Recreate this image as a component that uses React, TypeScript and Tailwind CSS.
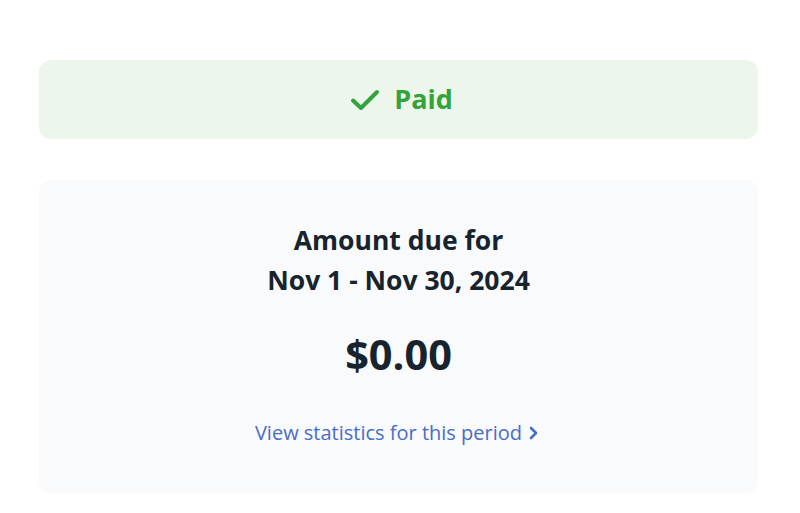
import React from 'react';

export default function App() {
  return (
    <div
      className="w-[800px] h-[513px] bg-white pl-[39px] pr-[42px] pt-[60px]"
      style={{ fontFamily: '"Open Sans", "Noto Sans", sans-serif' }}
    >
      <div className="h-[79px] rounded-[12px] bg-[#edf6ed] flex items-center justify-center gap-[14px] pl-[6px]">
        <svg width="30" height="22" viewBox="0 0 30 22" fill="none">
          <path d="M3 11.5 L11 19 L27 3" stroke="#33a33a" strokeWidth="4" strokeLinecap="round" strokeLinejoin="round" />
        </svg>
        <span className="text-[27px] font-bold text-[#33a33a]">Paid</span>
      </div>

      <div className="mt-[41px] h-[313px] rounded-[12px] bg-[#f8fafc] flex flex-col items-center pt-[40px]">
        <div className="text-[26.5px] font-bold text-[#17232d] leading-[40px] text-center">
          <div>Amount due for</div>
          <div>Nov 1 - Nov 30, 2024</div>
        </div>
        <div className="mt-[29px] text-[41.5px] font-bold text-[#17232d] leading-[50px]">$0.00</div>
        <a className="mt-[40px] pr-[4px] flex items-center gap-[6px] text-[20px] text-[#4a6cc8] leading-[28px]">
          View statistics for this period
          <svg width="10" height="14" viewBox="0 0 10 14" fill="none">
            <path d="M3 2 L8 7 L3 12" stroke="#4a6cc8" strokeWidth="2.6" strokeLinecap="round" strokeLinejoin="round" />
          </svg>
        </a>
      </div>
    </div>
  );
}
